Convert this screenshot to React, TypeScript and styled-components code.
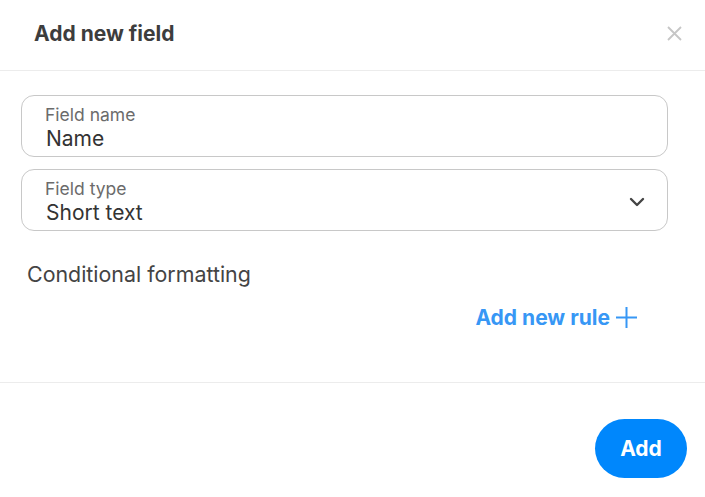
import React from "react";
import styled, { createGlobalStyle } from "styled-components";

const GlobalStyle = createGlobalStyle`
  html, body {
    margin: 0;
    padding: 0;
    background: #ffffff;
  }
  body {
    font-family: Inter, "Liberation Sans", Arial, sans-serif;
  }
`;

const Dialog = styled.div`
  width: 705px;
  height: 497px;
  background: #fff;
  display: flex;
  flex-direction: column;
  box-sizing: border-box;
`;

const Header = styled.header`
  height: 71px;
  box-sizing: border-box;
  display: flex;
  align-items: center;
  justify-content: space-between;
  padding: 0 22px 4px 34px;
  border-bottom: 1px solid #ececec;
`;

const Title = styled.h2`
  margin: 0;
  font-size: 21px;
  font-weight: 700;
  color: #3d3d3d;
`;

const CloseButton = styled.button`
  border: 0;
  background: none;
  padding: 0;
  width: 18px;
  height: 18px;
  display: flex;
  align-items: center;
  justify-content: center;
  cursor: pointer;
`;

const Body = styled.div`
  padding: 24px 37px 0 21px;
  display: flex;
  flex-direction: column;
  gap: 12px;
  height: 312px;
  box-sizing: border-box;
  border-bottom: 1px solid #ececec;
`;

const FieldBox = styled.div`
  height: 62px;
  box-sizing: border-box;
  border: 1px solid #c8c8c8;
  border-radius: 13px;
  padding: 4px 22px 0 23px;
  display: flex;
  align-items: center;
  justify-content: space-between;
`;

const FieldText = styled.div`
  display: flex;
  flex-direction: column;
`;

const FieldLabel = styled.span`
  font-size: 17.5px;
  color: #6b6b6b;
  line-height: 21px;
`;

const FieldValue = styled.span`
  font-size: 21px;
  color: #333;
  line-height: 27px;
  margin-left: 1px;
`;

const SectionTitle = styled.div`
  margin-top: 18px;
  padding-left: 6px;
  font-size: 21.4px;
  color: #444;
`;

const RuleRow = styled.div`
  display: flex;
  justify-content: flex-end;
  padding-right: 31px;
  margin-top: 6px;
`;

const AddRule = styled.button`
  border: 0;
  background: none;
  padding: 0;
  display: flex;
  align-items: center;
  gap: 6px;
  font-family: inherit;
  font-size: 21px;
  font-weight: 700;
  color: #3797f5;
  cursor: pointer;
`;

const Footer = styled.footer`
  flex: 1;
  display: flex;
  align-items: flex-start;
  justify-content: flex-end;
  padding: 36px 18px 0 0;
`;

const PrimaryButton = styled.button`
  width: 92px;
  height: 59px;
  border: 0;
  border-radius: 30px;
  background: #0087fc;
  color: #fff;
  font-family: inherit;
  font-size: 21px;
  font-weight: 700;
  cursor: pointer;
`;

const Chevron = () => (
  <svg width="16" height="10" viewBox="0 0 16 10" fill="none">
    <path d="M2 2l6 6 6-6" stroke="#444" strokeWidth="2.4" strokeLinecap="round" strokeLinejoin="round" />
  </svg>
);

const Plus = () => (
  <svg width="21" height="21" viewBox="0 0 21 21" fill="none">
    <path d="M10.5 0v21M0 10.5h21" stroke="#3797f5" strokeWidth="2" />
  </svg>
);

const CloseIcon = () => (
  <svg width="15" height="15" viewBox="0 0 15 15" fill="none">
    <path d="M1 1l13 13M14 1L1 14" stroke="#c6c6c6" strokeWidth="1.8" />
  </svg>
);

const Field = ({ label, value, select }: { label: string; value: string; select?: boolean }) => (
  <FieldBox>
    <FieldText>
      <FieldLabel>{label}</FieldLabel>
      <FieldValue>{value}</FieldValue>
    </FieldText>
    {select && <Chevron />}
  </FieldBox>
);

export default function App() {
  return (
    <>
      <GlobalStyle />
      <Dialog>
        <Header>
          <Title>Add new field</Title>
          <CloseButton aria-label="Close">
            <CloseIcon />
          </CloseButton>
        </Header>
        <Body>
          <Field label="Field name" value="Name" />
          <Field label="Field type" value="Short text" select />
          <SectionTitle>Conditional formatting</SectionTitle>
          <RuleRow>
            <AddRule>
              Add new rule <Plus />
            </AddRule>
          </RuleRow>
        </Body>
        <Footer>
          <PrimaryButton>Add</PrimaryButton>
        </Footer>
      </Dialog>
    </>
  );
}
